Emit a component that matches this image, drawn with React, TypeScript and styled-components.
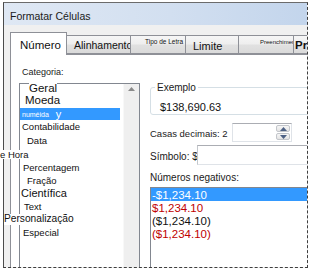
import React from 'react';
import styled, { createGlobalStyle } from 'styled-components';

// --- Global ---
const GlobalStyle = createGlobalStyle`
  html, body {
    margin: 0;
    padding: 0;
    background: #ffffff;
  }
  body {
    font-family: "Liberation Sans", Arial, sans-serif;
    color: #000;
  }
`;

// --- Window frame ---
const Screen = styled.div`
  width: 309px;
  height: 270px;
  padding: 2px 0 0 3px;
  box-sizing: border-box;
  overflow: hidden;
`;

const Window = styled.div`
  width: 305px;
  height: 266px;
  box-sizing: border-box;
  border-left: 1px solid #4b4b4b;
  border-top: 1px solid #6b6b6b;
  border-right: 1px dashed #3e3e3e;
  border-bottom: 1px dashed #3e3e3e;
  background: #f0f0f0;
  display: flex;
  flex-direction: column;
`;

const TitleBar = styled.div`
  height: 22px;
  box-sizing: border-box;
  padding: 4px 0 0 6px;
  line-height: 18px;
  font-size: 10.5px;
  color: #1a1a1a;
  background: linear-gradient(to right, #dfe8f4 0%, #d2dff0 55%, #c3d5ec 100%);
`;

const Body = styled.div`
  flex: 1;
  min-height: 0;
  display: flex;
  flex-direction: column;
  padding: 7px 0 0 6px;
  clip-path: inset(0 0 0 -10px);
`;

// --- Tabs ---
const TabRow = styled.div`
  display: flex;
  align-items: flex-end;
  height: 23px;
  margin-bottom: -1px;
`;

const Tab = styled.div<{ $active?: boolean; $w: number; $pad: number; $top: number; $size: number; $bold?: boolean }>`
  flex: none;
  width: ${p => p.$w}px;
  height: ${p => (p.$active ? 23 : 19)}px;
  margin-bottom: ${p => (p.$active ? 0 : 1)}px;
  margin-left: -1px;
  box-sizing: border-box;
  border: 1px solid #8e9097;
  border-bottom: ${p => (p.$active ? 'none' : '1px solid #8e9097')};
  padding: ${p => p.$top}px 0 0 ${p => p.$pad}px;
  font-size: ${p => p.$size}px;
  font-weight: ${p => (p.$bold ? 700 : 400)};
  line-height: ${p => (p.$size < 9 ? 8 : 12)}px;
  white-space: nowrap;
  overflow: hidden;
  color: #111;
  background: ${p =>
    p.$active
      ? '#ffffff'
      : 'linear-gradient(#f6f6f6 0%, #eeeeee 48%, #e1e1e1 52%, #dadada 100%)'};
  position: ${p => (p.$active ? 'relative' : 'static')};
  z-index: ${p => (p.$active ? 1 : 'auto')};

  &:first-child {
    margin-left: 0;
  }
`;

// --- Panel ---
const Panel = styled.div`
  flex: 1;
  display: flex;
  gap: 10px;
  margin-bottom: -30px;
  border: 1px solid #8e9097;
  border-right: none;
  background: #ffffff;
`;

const LeftColumn = styled.div`
  width: 121px;
  flex: none;
  display: flex;
  flex-direction: column;
  padding: 11px 0 0 8px;
`;

const RightColumn = styled.div`
  flex: 1;
  min-width: 0;
  display: flex;
  flex-direction: column;
  padding-top: 32px;
  overflow: hidden;
`;

const SmallLabel = styled.div<{ $size: number; $h: number }>`
  height: ${p => p.$h}px;
  line-height: ${p => p.$h}px;
  font-size: ${p => p.$size}px;
  color: #1a1a1a;
  white-space: nowrap;
`;

const CategoryLabel = styled(SmallLabel)`
  padding-left: 3px;
`;

// --- Category list ---
const ListBox = styled.div`
  flex: 1;
  margin-top: 4px;
  display: flex;
  border: 1px solid #828790;
`;

const Items = styled.div`
  flex: 1;
  margin-right: 3px;
  display: flex;
  flex-direction: column;
`;

const Item = styled.div<{ $h: number; $selected?: boolean }>`
  height: ${p => p.$h}px;
  display: flex;
  align-items: center;
  white-space: nowrap;
  background: ${p => (p.$selected ? '#3399ff' : 'transparent')};
  color: ${p => (p.$selected ? '#ffffff' : '#111')};
`;

const ItemText = styled.span<{ $size: number; $indent: number; $selected?: boolean }>`
  margin-left: ${p => p.$indent}px;
  font-size: ${p => p.$size}px;
  line-height: 1;
  background: ${p => (p.$selected ? 'transparent' : '#ffffff')};
`;

const ScrollBar = styled.div`
  width: 16px;
  flex: none;
  display: flex;
  justify-content: center;
  padding-top: 3px;
  box-sizing: border-box;
  background: #efefef;
  border-left: 1px solid #f8f8f8;
`;

// --- Right side ---
const ExampleBox = styled.div`
  position: relative;
  height: 28px;
  margin-right: -10px;
  box-sizing: border-box;
  border: 1px solid #d5dfe5;
  border-radius: 3px;
  padding: 13px 0 0 9px;
`;

const Legend = styled.span`
  position: absolute;
  top: -6px;
  left: 4px;
  padding: 0 2px;
  background: #ffffff;
  font-size: 10px;
  line-height: 12px;
  color: #1a1a1a;
`;

const ExampleValue = styled.div`
  font-size: 11px;
  line-height: 13px;
  color: #111;
`;

const FieldRow = styled.div<{ $h: number; $mt: number }>`
  display: flex;
  align-items: stretch;
  height: ${p => p.$h}px;
  margin-top: ${p => p.$mt}px;
`;

const FieldLabel = styled.div<{ $w: number; $size: number }>`
  width: ${p => p.$w}px;
  flex: none;
  display: flex;
  align-items: center;
  padding-top: 2px;
  font-size: ${p => p.$size}px;
  white-space: nowrap;
  color: #1a1a1a;
`;

const Spinner = styled.div`
  width: 60px;
  flex: none;
  display: flex;
  justify-content: flex-end;
  box-sizing: border-box;
  border: 1px solid #dfe3e8;
  border-top-color: #abadb3;
  padding: 1px;
`;

const SpinButtons = styled.div`
  width: 14px;
  display: flex;
  flex-direction: column;
  gap: 1px;
`;

const SpinButton = styled.div`
  flex: 1;
  display: flex;
  align-items: center;
  justify-content: center;
  border: 1px solid #c3c6cb;
  border-radius: 2px;
  background: linear-gradient(#f6f6f6, #e4e4e4);
`;

const TextInput = styled.div`
  flex: 1;
  margin-right: -10px;
  border: 1px solid #dfe3e8;
  border-top-color: #abadb3;
  border-left-color: #c4c7cc;
`;

const NegLabel = styled(SmallLabel)`
  margin-top: 6px;
`;

const NegList = styled.div`
  flex: 1;
  margin-top: 2px;
  margin-right: -10px;
  border: 1px solid #828790;
  display: flex;
  flex-direction: column;
`;

const NegItem = styled.div<{ $selected?: boolean; $red?: boolean }>`
  height: 13px;
  flex: none;
  display: flex;
  align-items: center;
  padding-left: 1px;
  font-size: 11.5px;
  white-space: nowrap;
  background: ${p => (p.$selected ? '#3399ff' : 'transparent')};
  color: ${p => (p.$selected ? '#ffffff' : p.$red ? '#c00000' : '#111')};
`;

// --- Data ---
type Tabdef = { label: string; w: number; pad: number; top: number; size: number; active?: boolean; bold?: boolean };

const tabs: Tabdef[] = [
  { label: 'Número', w: 57, pad: 9, top: 6, size: 11.5, active: true },
  { label: 'Alinhamento', w: 65, pad: 7, top: 3, size: 10.5 },
  { label: 'Tipo de Letra', w: 56, pad: 14, top: 2, size: 6.5 },
  { label: 'Limite', w: 54, pad: 7, top: 4, size: 11 },
  { label: 'Preenchimento', w: 56, pad: 21, top: 2, size: 6 },
  { label: 'Pr', w: 30, pad: 1, top: 3, size: 11.5, bold: true },
];

type Category = { label: string; size: number; indent: number; h: number };

const before: Category[] = [
  { label: 'Geral', size: 11.5, indent: 9, h: 10 },
  { label: 'Moeda', size: 11.5, indent: 5, h: 14 },
];

const after: Category[] = [
  { label: 'Contabilidade', size: 9.5, indent: 2, h: 14 },
  { label: 'Data', size: 9.5, indent: 7, h: 14 },
  { label: 'e Hora', size: 9.5, indent: -20, h: 13 },
  { label: 'Percentagem', size: 9.5, indent: 3, h: 13 },
  { label: 'Fração', size: 9.5, indent: 7, h: 13 },
  { label: 'Científica', size: 11, indent: 1, h: 13 },
  { label: 'Text', size: 9.5, indent: 4, h: 13 },
  { label: 'Personalização', size: 10.2, indent: -16, h: 13 },
  { label: 'Especial', size: 9.5, indent: 3, h: 13 },
];

const negatives = [
  { text: '-$1,234.10', red: false },
  { text: '$1,234.10', red: true },
  { text: '($1,234.10)', red: false },
  { text: '($1,234.10)', red: true },
];

const Arrow: React.FC<{ up?: boolean; color?: string }> = ({ up, color = '#8a8a8a' }) => (
  <svg width="7" height="4" viewBox="0 0 7 4">
    <polygon points={up ? '0,4 3.5,0 7,4' : '0,0 3.5,4 7,0'} fill={color} />
  </svg>
);

const renderCategory = (c: Category) => (
  <Item key={c.label} $h={c.h}>
    <ItemText $size={c.size} $indent={c.indent}>{c.label}</ItemText>
  </Item>
);

const App: React.FC = () => {
  return (
    <>
      <GlobalStyle />
      <Screen>
        <Window>
          <TitleBar>Formatar Células</TitleBar>
          <Body>
            <TabRow>
              {tabs.map(t => (
                <Tab
                  key={t.label}
                  $active={t.active}
                  $w={t.w}
                  $pad={t.pad}
                  $top={t.top}
                  $size={t.size}
                  $bold={t.bold}
                >
                  {t.label}
                </Tab>
              ))}
            </TabRow>
            <Panel>
              <LeftColumn>
                <CategoryLabel $size={9} $h={13}>Categoria:</CategoryLabel>
                <ListBox>
                  <Items>
                    {before.map(renderCategory)}
                    <Item $h={12} $selected>
                      <ItemText $size={7} $indent={2} $selected>numéida</ItemText>
                      <ItemText $size={11} $indent={7} $selected>y</ItemText>
                    </Item>
                    {after.map(renderCategory)}
                  </Items>
                  <ScrollBar>
                    <Arrow up />
                  </ScrollBar>
                </ListBox>
              </LeftColumn>
              <RightColumn>
                <ExampleBox>
                  <Legend>Exemplo</Legend>
                  <ExampleValue>$138,690.63</ExampleValue>
                </ExampleBox>
                <FieldRow $h={19} $mt={8}>
                  <FieldLabel $w={82} $size={9.5}>Casas decimais: 2</FieldLabel>
                  <Spinner>
                    <SpinButtons>
                      <SpinButton><Arrow up color="#4d6185" /></SpinButton>
                      <SpinButton><Arrow color="#4d6185" /></SpinButton>
                    </SpinButtons>
                  </Spinner>
                </FieldRow>
                <FieldRow $h={20} $mt={3}>
                  <FieldLabel $w={47} $size={10}>Símbolo: $</FieldLabel>
                  <TextInput />
                </FieldRow>
                <NegLabel $size={10} $h={14}>Números negativos:</NegLabel>
                <NegList>
                  {negatives.map((n, i) => (
                    <NegItem key={i} $selected={i === 0} $red={n.red}>{n.text}</NegItem>
                  ))}
                </NegList>
              </RightColumn>
            </Panel>
          </Body>
        </Window>
      </Screen>
    </>
  );
};

export default App;
